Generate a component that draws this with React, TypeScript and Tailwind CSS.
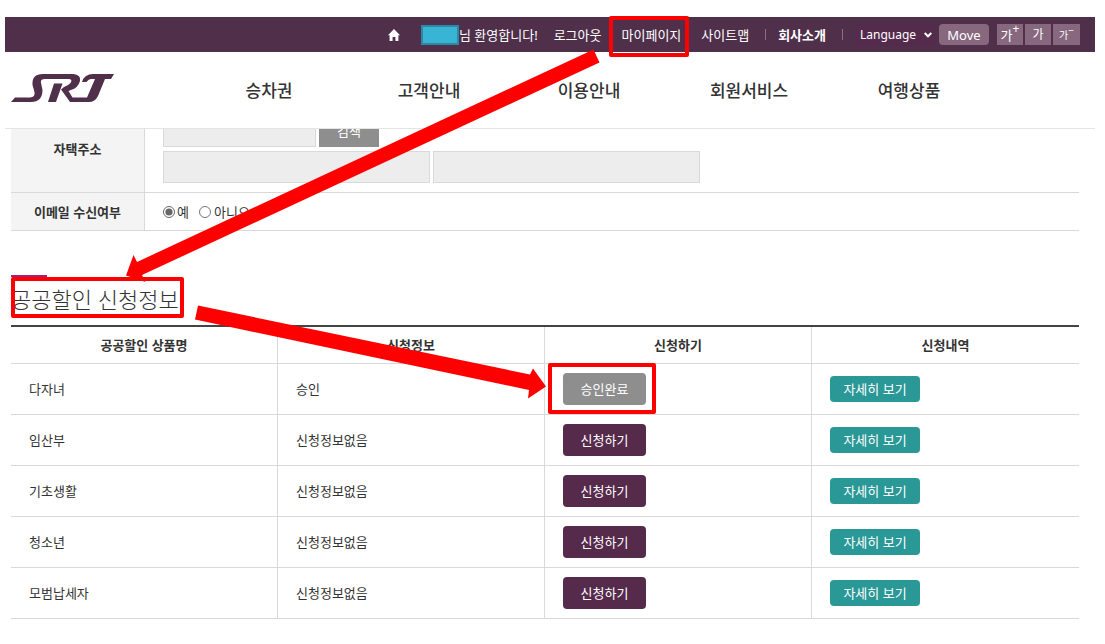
import React, { useState } from "react";

interface IDiscount {
  name: string;
  status: string;
  approved: boolean;
}

const discounts: IDiscount[] = [
  { name: "다자녀", status: "승인", approved: true },
  { name: "임산부", status: "신청정보없음", approved: false },
  { name: "기초생활", status: "신청정보없음", approved: false },
  { name: "청소년", status: "신청정보없음", approved: false },
  { name: "모범납세자", status: "신청정보없음", approved: false },
];

const menus = ["승차권", "고객안내", "이용안내", "회원서비스", "여행상품"];

const App = (): React.ReactElement => {
  return (
    <div className="relative overflow-hidden bg-white pt-[17px] pb-6 font-['Noto_Sans','Noto_Sans_CJK_KR',sans-serif] text-[13px] leading-5 text-[#333]">
      <header className="mr-[10px] ml-[5px]">
        <TopBar />
        <MainMenu />
      </header>
      <main className="mr-[26px] ml-[11px]">
        <MemberForm />
        <DiscountSection />
      </main>
      <Arrows />
    </div>
  );
};

const Highlight = ({ className }: { className: string }): React.ReactElement => {
  return (
    <span
      className={`pointer-events-none absolute rounded-xs border-4 border-[#ff0000] ${className}`}
    />
  );
};

const TopBar = (): React.ReactElement => {
  return (
    <div className="flex h-[35px] items-center justify-end bg-[#4f2f4a] pr-[15px] whitespace-nowrap text-white">
      <a href="#" aria-label="홈" className="mr-5">
        <svg width="14" height="12" viewBox="0 0 14 12" fill="#fff">
          <path d="M7 0 L13 6.2 H11.4 V12 H8.4 V8 H5.6 V12 H2.6 V6.2 H1 Z" />
        </svg>
      </a>
      <span className="h-5 w-[38px] border-2 border-[#2d88a3] bg-[#38b4d5]" />
      <span className="mr-4">님 환영합니다!</span>
      <a href="#" className="mr-5">
        로그아웃
      </a>
      <a href="#" className="relative mr-5">
        마이페이지
        <Highlight className="-top-[9px] -right-2 -bottom-3 -left-[13px]" />
      </a>
      <a href="#">사이트맵</a>
      <span className="mr-3 ml-4 h-[11px] w-px bg-[#8b6f87]" />
      <a href="#" className="font-bold">
        회사소개
      </a>
      <span className="mr-3 ml-4 h-[11px] w-px bg-[#8b6f87]" />
      <div className="relative mr-1 flex items-center">
        <select
          aria-label="Language"
          className="h-[22px] w-[80px] appearance-none bg-[#552b4d] pl-[5px] text-[12px] leading-5"
        >
          <option>Language</option>
        </select>
        <svg
          className="pointer-events-none absolute right-[3px]"
          width="8"
          height="6"
          viewBox="0 0 8 6"
          fill="none"
          stroke="#fff"
          strokeWidth="2"
        >
          <path d="M0.7 1 L4 4.3 L7.3 1" />
        </svg>
      </div>
      <button className="mr-2 h-[21px] w-[50px] rounded bg-[#87687f]">Move</button>
      <div className="flex gap-[2px]">
        <button className="flex h-[21px] w-[26px] items-center justify-center bg-[#87687f]">
          가<sup className="text-[12px]">+</sup>
        </button>
        <button className="h-[21px] w-[26px] bg-[#87687f] text-[12px]">가</button>
        <button className="flex h-[21px] w-[27px] items-center justify-center bg-[#87687f] text-[10px]">
          가<sup className="text-[10px]">−</sup>
        </button>
      </div>
    </div>
  );
};

const MainMenu = (): React.ReactElement => {
  return (
    <div className="flex h-[77px] items-start border-b border-[#e5e5e5] pl-[6px]">
      <a href="#" aria-label="SRT" className="mt-[22px] w-[178px]">
        <svg width="104" height="28" viewBox="0 0 104 28" fill="#4f2f4a">
          <path d="M0 28 L4 23.500 H19 Q24.500 23 23.500 18 L21.500 11 Q20.500 0 32 0 H62 Q70.500 1 69 7 Q67 14 60 16 L57.500 17 L61.500 23.500 H76 L84 5 H80 Q77.500 5 75.500 8 H71 Q73.500 0 82 0 H103 L100 5 H94 L87 22 Q84 28 78 28 H59 Q57 25 50 15.500 Q52 13 57 11 Q60 9.500 60.500 7 Q60.500 5 58 5 H34 Q29 5 30 9 L31.500 16 Q31.500 28 20 28 Z" />
          <path d="M43 9.500 H51.500 L45 28 H37 Z" />
        </svg>
      </a>
      <nav className="mt-[27px] flex">
        {menus.map((menu) => (
          <a
            href="#"
            key={menu}
            className="w-40 text-center text-[17px] leading-6 font-medium"
          >
            {menu}
          </a>
        ))}
      </nav>
    </div>
  );
};

const MemberForm = (): React.ReactElement => {
  const [receiveEmail, setReceiveEmail] = useState<boolean>(true);

  return (
    <div className="overflow-hidden">
      {/* the first line of the address is scrolled under the header */}
      <table className="-mt-[23px] w-full border-separate border-spacing-0">
        <tbody>
          <tr>
            <th className="w-[134px] border-r border-b border-[#d9d9d9] bg-[#f4f4f4] p-0 font-bold">
              자택주소
            </th>
            <td className="border-b border-[#d9d9d9] py-[9px] pl-[18px]">
              <div className="flex gap-[3px]">
                <input
                  aria-label="우편번호"
                  readOnly
                  className="h-8 w-[153px] border border-[#d9d9d9] bg-[#ededed]"
                />
                <button className="h-8 w-[60px] bg-[#8e8e8e] text-white">검색</button>
              </div>
              <div className="mt-1 flex gap-[3px]">
                <input
                  aria-label="주소"
                  readOnly
                  className="h-8 w-[267px] border border-[#d9d9d9] bg-[#ededed]"
                />
                <input
                  aria-label="상세주소"
                  readOnly
                  className="h-8 w-[267px] border border-[#d9d9d9] bg-[#ededed]"
                />
              </div>
            </td>
          </tr>
          <tr>
            <th className="h-[38px] border-r border-b border-[#d9d9d9] bg-[#f4f4f4] p-0 font-bold">
              이메일 수신여부
            </th>
            <td className="border-b border-[#d9d9d9] p-0 pl-[18px]">
              <div className="flex items-center gap-[10px]">
                <label className="flex items-center gap-[2px]">
                  <input
                    type="radio"
                    name="email"
                    className="size-3 accent-[#666]"
                    checked={receiveEmail}
                    onChange={() => setReceiveEmail(true)}
                  />
                  예
                </label>
                <label className="flex items-center gap-[3px]">
                  <input
                    type="radio"
                    name="email"
                    className="size-3"
                    checked={!receiveEmail}
                    onChange={() => setReceiveEmail(false)}
                  />
                  아니오
                </label>
              </div>
            </td>
          </tr>
        </tbody>
      </table>
    </div>
  );
};

const DiscountSection = (): React.ReactElement => {
  return (
    <section className="mt-11">
      <div className="h-[2px] w-9 bg-[#a3217c]" />
      <h2 className="relative flex h-[41px] w-[173px] items-center pt-[2px] text-[22px] font-light whitespace-nowrap">
        공공할인 신청정보
        <Highlight className="inset-0" />
      </h2>
      <table className="mt-[7px] w-full table-fixed border-separate border-spacing-0 border-t-2 border-[#444]">
        <thead>
          <tr>
            {["공공할인 상품명", "신청정보", "신청하기", "신청내역"].map((title) => (
              <th
                key={title}
                className="h-[37px] border-r border-b border-[#d9d9d9] p-0 font-bold last:border-r-0"
              >
                {title}
              </th>
            ))}
          </tr>
        </thead>
        <tbody>
          {discounts.map((discount) => (
            <DiscountRow discount={discount} key={discount.name} />
          ))}
        </tbody>
      </table>
    </section>
  );
};

const DiscountRow = ({ discount }: { discount: IDiscount }): React.ReactElement => {
  return (
    <tr>
      <td className="h-[51px] border-r border-b border-[#d9d9d9] p-0 pl-[18px]">
        {discount.name}
      </td>
      <td className="border-r border-b border-[#d9d9d9] p-0 pl-[18px]">
        {discount.status}
      </td>
      <td className="border-r border-b border-[#d9d9d9] p-0 pl-[18px]">
        {discount.approved ? (
          <div className="relative w-[83px]">
            <button className="block h-8 w-[83px] rounded bg-[#8e8e8e] text-white">
              승인완료
            </button>
            <Highlight className="-top-[10px] -right-[10px] -bottom-[9px] -left-[15px]" />
          </div>
        ) : (
          <button className="block h-8 w-[83px] rounded bg-[#562a4a] text-white">
            신청하기
          </button>
        )}
      </td>
      <td className="border-b border-[#d9d9d9] p-0 pl-[18px]">
        <button className="block h-[26px] w-[90px] rounded bg-[#2a9897] text-white">
          자세히 보기
        </button>
      </td>
    </tr>
  );
};

const Arrows = (): React.ReactElement => {
  return (
    <svg
      className="pointer-events-none absolute top-0 left-0"
      width="660"
      height="420"
      viewBox="0 0 660 420"
      fill="#ff0000"
    >
      <path d="M593.5 49.5 L599.5 62.5 L142 275 L145.500 282 L126 275.500 L133.500 255 L137 262 Z" />
      <path d="M198 305.500 L530 374.500 L533 368.500 L546 386.500 L528 398.500 L529 390 L195 319.500 Z" />
    </svg>
  );
};

export default App;
